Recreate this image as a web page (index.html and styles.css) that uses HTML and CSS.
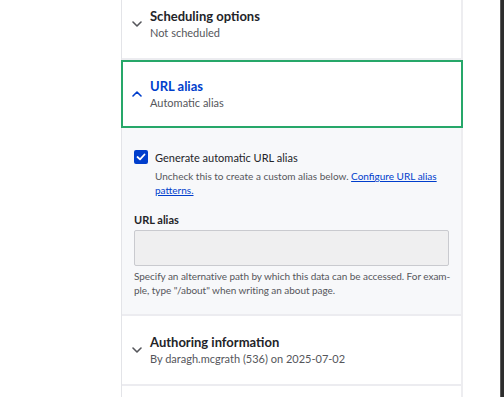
FILE: index.html
```html
<!DOCTYPE html>
<html lang="en">
<head>
  <meta charset="UTF-8">
  <meta name="viewport" content="width=device-width, initial-scale=1.0">
  <title>Node sidebar</title>
  <link rel="stylesheet" href="styles.css">
</head>
<body>
  <div class="page">
    <div class="gutter"></div>

    <aside class="sidebar">
      <div class="panel panel-first">
        <div class="summary">
          <svg class="chevron" width="10" height="6" viewBox="0 0 10 6"><polyline points="1,1 5,5 9,1"/></svg>
          <div class="summary-text">
            <div class="summary-title">Scheduling options</div>
            <div class="summary-sub">Not scheduled</div>
          </div>
        </div>
      </div>

      <div class="panel open">
        <div class="summary focused">
          <svg class="chevron up" width="10" height="6" viewBox="0 0 10 6"><polyline points="1,5 5,1 9,5"/></svg>
          <div class="summary-text">
            <div class="summary-title">URL alias</div>
            <div class="summary-sub">Automatic alias</div>
          </div>
        </div>
        <div class="panel-body">
          <div class="check-row">
            <span class="checkbox">
              <svg width="10" height="8" viewBox="0 0 10 8"><polyline points="1.5,4 4,6.3 8.5,1.5"/></svg>
            </span>
            <label>Generate automatic URL alias</label>
          </div>
          <p class="check-desc">Uncheck this to create a custom alias below. <a href="#">Configure URL alias</a><br><a href="#">patterns.</a></p>

          <div class="field-label">URL alias</div>
          <input class="text-input" type="text" disabled>
          <p class="field-desc">Specify an alternative path by which this data can be accessed. For exam-<br>ple, type "/about" when writing an about page.</p>
        </div>
      </div>

      <div class="panel">
        <div class="summary">
          <svg class="chevron" width="10" height="6" viewBox="0 0 10 6"><polyline points="1,1 5,5 9,1"/></svg>
          <div class="summary-text">
            <div class="summary-title">Authoring information</div>
            <div class="summary-sub">By daragh.mcgrath (536) on 2025-07-02</div>
          </div>
        </div>
      </div>

      <div class="panel panel-last"></div>
    </aside>

    <div class="scrollbar"></div>
  </div>
</body>
</html>
```

FILE: styles.css
```css
body {
  margin: 0;
  background-color: #fff;
  font-family: Lato, "Liberation Sans", sans-serif;
  color: #232429;
}

.page {
  display: flex;
  height: 397px;
  overflow: hidden;
}

.gutter {
  width: 121px;
  flex: none;
}

.sidebar {
  width: 339px;
  flex: none;
  border-left: 1px solid #e3e4e8;
  border-right: 2px solid #ededf0;
}

.panel {
  border-bottom: 2px solid #ececf0;
}

.panel-first {
  margin-top: -10px;
}

.panel-last {
  height: 60px;
}

.summary {
  display: flex;
  align-items: center;
  gap: 8px;
  height: 68px;
  box-sizing: border-box;
  padding: 0 12px 0 10px;
}

.summary.focused {
  margin: 0 -2px 0 -1px;
  padding-left: 9px;
  border: 2px solid #26a769;
  background-color: #fff;
}

.chevron {
  flex: none;
  fill: none;
  stroke: #55565b;
  stroke-width: 1.6;
  stroke-linecap: round;
  stroke-linejoin: round;
}

.chevron.up {
  stroke: #003ecc;
}

.summary-title {
  font-size: 13px;
  font-weight: 700;
  line-height: 18px;
  color: #232429;
}

.open .summary-title {
  color: #003ecc;
}

.summary-sub {
  font-size: 11px;
  line-height: 16px;
  color: #55565b;
}

.panel-body {
  background-color: #f7f8fa;
  padding: 21px 12px 17px 12px;
}

.check-row {
  display: flex;
  align-items: center;
  gap: 7px;
  height: 16px;
}

.checkbox {
  display: flex;
  align-items: center;
  justify-content: center;
  width: 14px;
  height: 14px;
  border-radius: 2px;
  background-color: #003ecc;
}

.checkbox polyline {
  fill: none;
  stroke: #fff;
  stroke-width: 1.8;
  stroke-linecap: round;
  stroke-linejoin: round;
}

.check-row label {
  font-size: 11px;
  color: #232429;
}

.check-desc {
  margin: 5px 0 0 21px;
  font-size: 10px;
  line-height: 13.5px;
  color: #55565b;
}

.check-desc a {
  color: #003ecc;
}

.field-label {
  margin-top: 16px;
  font-size: 11px;
  font-weight: 700;
  line-height: 14px;
}

.text-input {
  display: block;
  width: 100%;
  height: 36px;
  box-sizing: border-box;
  margin: 3px 0 0 0;
  border: 1px solid #c9cacf;
  border-radius: 2px;
  background-color: #efeff0;
}

.field-desc {
  margin: 4px 0 0 0;
  font-size: 10px;
  line-height: 13.5px;
  letter-spacing: -0.05px;
  white-space: nowrap;
  color: #55565b;
}

.scrollbar {
  margin-left: auto;
  width: 3px;
  flex: none;
  background-color: #2d2d2d;
  border-left: 1px solid #5c5c5c;
}
```
